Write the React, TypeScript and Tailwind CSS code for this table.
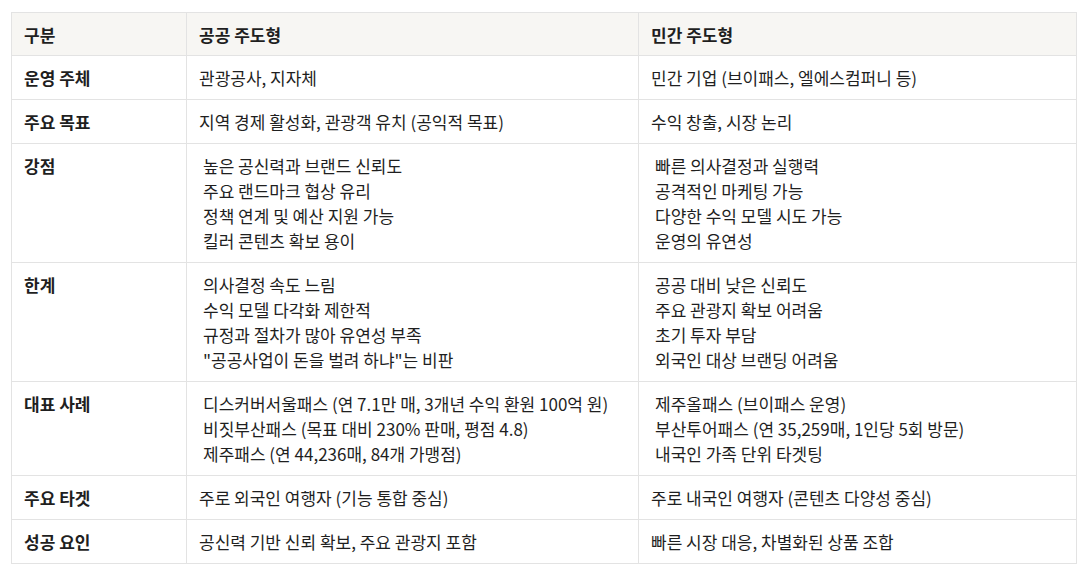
import React from "react";

type Row = { label: string; pub: string[]; pri: string[] };

const rows: Row[] = [
  { label: "운영 주체", pub: ["관광공사, 지자체"], pri: ["민간 기업 (브이패스, 엘에스컴퍼니 등)"] },
  { label: "주요 목표", pub: ["지역 경제 활성화, 관광객 유치 (공익적 목표)"], pri: ["수익 창출, 시장 논리"] },
  {
    label: "강점",
    pub: ["높은 공신력과 브랜드 신뢰도", "주요 랜드마크 협상 유리", "정책 연계 및 예산 지원 가능", "킬러 콘텐츠 확보 용이"],
    pri: ["빠른 의사결정과 실행력", "공격적인 마케팅 가능", "다양한 수익 모델 시도 가능", "운영의 유연성"],
  },
  {
    label: "한계",
    pub: ["의사결정 속도 느림", "수익 모델 다각화 제한적", "규정과 절차가 많아 유연성 부족", "\"공공사업이 돈을 벌려 하냐\"는 비판"],
    pri: ["공공 대비 낮은 신뢰도", "주요 관광지 확보 어려움", "초기 투자 부담", "외국인 대상 브랜딩 어려움"],
  },
  {
    label: "대표 사례",
    pub: ["디스커버서울패스 (연 7.1만 매, 3개년 수익 환원 100억 원)", "비짓부산패스 (목표 대비 230% 판매, 평점 4.8)", "제주패스 (연 44,236매, 84개 가맹점)"],
    pri: ["제주올패스 (브이패스 운영)", "부산투어패스 (연 35,259매, 1인당 5회 방문)", "내국인 가족 단위 타겟팅"],
  },
  { label: "주요 타겟", pub: ["주로 외국인 여행자 (기능 통합 중심)"], pri: ["주로 내국인 여행자 (콘텐츠 다양성 중심)"] },
  { label: "성공 요인", pub: ["공신력 기반 신뢰 확보, 주요 관광지 포함"], pri: ["빠른 시장 대응, 차별화된 상품 조합"] },
];

function Cell({ lines }: { lines: string[] }) {
  const multi = lines.length > 1;
  return (
    <td className="border border-[#e3e3e3] px-3 pt-[9px] pb-[9px] align-top">
      {lines.map((l, i) => (
        <div key={i} className={multi ? "pl-[4px]" : ""}>
          {l}
        </div>
      ))}
    </td>
  );
}

export default function App() {
  return (
    <div
      className="bg-white w-[1085px] h-[572px] pt-[12px] pl-[11px] text-[#1f1f1f] text-[17px] leading-[25px]"
      style={{ fontFamily: '"Noto Sans CJK KR", "Noto Sans", sans-serif' }}
    >
      <table className="table-fixed border-collapse w-[1065px]">
        <colgroup>
          <col className="w-[175px]" />
          <col className="w-[452px]" />
          <col className="w-[438px]" />
        </colgroup>
        <thead>
          <tr className="bg-[#f7f6f3]">
            <th className="border border-[#e3e3e3] px-3 pt-[9px] pb-[8px] text-left font-bold">구분</th>
            <th className="border border-[#e3e3e3] px-3 pt-[9px] pb-[8px] text-left font-bold">공공 주도형</th>
            <th className="border border-[#e3e3e3] px-3 pt-[9px] pb-[8px] text-left font-bold">민간 주도형</th>
          </tr>
        </thead>
        <tbody>
          {rows.map((r) => (
            <tr key={r.label}>
              <td className="border border-[#e3e3e3] px-3 pt-[9px] pb-[9px] align-top font-bold">{r.label}</td>
              <Cell lines={r.pub} />
              <Cell lines={r.pri} />
            </tr>
          ))}
        </tbody>
      </table>
    </div>
  );
}
